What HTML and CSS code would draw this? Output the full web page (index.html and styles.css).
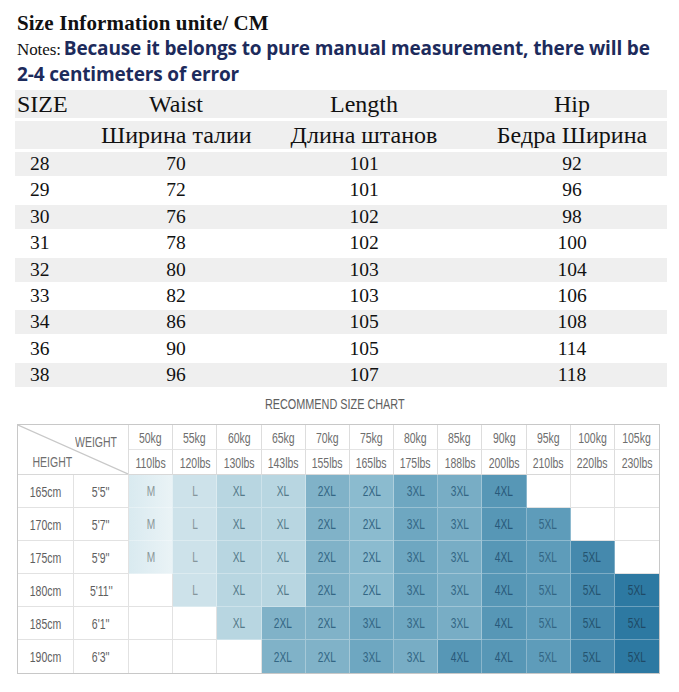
FILE: index.html
```html
<!DOCTYPE html>
<html lang="en">
<head>
<meta charset="utf-8">
<title>Size Information</title>
<link rel="stylesheet" href="styles.css">
</head>
<body>
<div class="page">
  <div class="title">Size Information unite/ CM</div>
  <div class="notes"><span class="notes-label">Notes:</span><span class="notes-text">Because it belongs to pure manual measurement, there will be <span class="nb">2-4</span> centimeters of error</span></div>

  <div class="size-table">
    <div class="row head">
      <div class="c c1 left">SIZE</div>
      <div class="c">Waist</div>
      <div class="c">Length</div>
      <div class="c">Hip</div>
    </div>
    <div class="row head">
      <div class="c c1"></div>
      <div class="c">Ширина талии</div>
      <div class="c">Длина штанов</div>
      <div class="c">Бедра Ширина</div>
    </div>
    <div class="rows">
      <div class="row data alt"><div class="c c1 num">28</div><div class="c">70</div><div class="c">101</div><div class="c">92</div></div>
      <div class="row data"><div class="c c1 num">29</div><div class="c">72</div><div class="c">101</div><div class="c">96</div></div>
      <div class="row data alt"><div class="c c1 num">30</div><div class="c">76</div><div class="c">102</div><div class="c">98</div></div>
      <div class="row data"><div class="c c1 num">31</div><div class="c">78</div><div class="c">102</div><div class="c">100</div></div>
      <div class="row data alt"><div class="c c1 num">32</div><div class="c">80</div><div class="c">103</div><div class="c">104</div></div>
      <div class="row data"><div class="c c1 num">33</div><div class="c">82</div><div class="c">103</div><div class="c">106</div></div>
      <div class="row data alt"><div class="c c1 num">34</div><div class="c">86</div><div class="c">105</div><div class="c">108</div></div>
      <div class="row data"><div class="c c1 num">36</div><div class="c">90</div><div class="c">105</div><div class="c">114</div></div>
      <div class="row data alt"><div class="c c1 num">38</div><div class="c">96</div><div class="c">107</div><div class="c">118</div></div>
    </div>
  </div>

  <div class="chart-title"><span class="t">RECOMMEND SIZE CHART</span></div>

  <div class="chart">
    <div class="corner">
      <svg class="diag" viewBox="0 0 100 100" preserveAspectRatio="none"><line x1="0" y1="0" x2="100" y2="100" stroke="#c8c8c8" stroke-width="1.2" vector-effect="non-scaling-stroke"/></svg>
      <span class="w-label"><span class="t">WEIGHT</span></span>
      <span class="h-label"><span class="t">HEIGHT</span></span>
    </div>
    <div class="hc kg"><span class="t">50kg</span></div><div class="hc kg"><span class="t">55kg</span></div><div class="hc kg"><span class="t">60kg</span></div><div class="hc kg"><span class="t">65kg</span></div><div class="hc kg"><span class="t">70kg</span></div><div class="hc kg"><span class="t">75kg</span></div><div class="hc kg"><span class="t">80kg</span></div><div class="hc kg"><span class="t">85kg</span></div><div class="hc kg"><span class="t">90kg</span></div><div class="hc kg"><span class="t">95kg</span></div><div class="hc kg"><span class="t">100kg</span></div><div class="hc kg last"><span class="t">105kg</span></div>
    <div class="hc lb"><span class="t">110lbs</span></div><div class="hc lb"><span class="t">120lbs</span></div><div class="hc lb"><span class="t">130lbs</span></div><div class="hc lb"><span class="t">143lbs</span></div><div class="hc lb"><span class="t">155lbs</span></div><div class="hc lb"><span class="t">165lbs</span></div><div class="hc lb"><span class="t">175lbs</span></div><div class="hc lb"><span class="t">188lbs</span></div><div class="hc lb"><span class="t">200lbs</span></div><div class="hc lb"><span class="t">210lbs</span></div><div class="hc lb"><span class="t">220lbs</span></div><div class="hc lb last"><span class="t">230lbs</span></div>

    <div class="hcell"><span class="t">165cm</span></div><div class="hcell"><span class="t">5'5''</span></div>
    <div class="cell m"><span class="t">M</span></div><div class="cell l"><span class="t">L</span></div><div class="cell xl"><span class="t">XL</span></div><div class="cell xl"><span class="t">XL</span></div><div class="cell x2"><span class="t">2XL</span></div><div class="cell x2b"><span class="t">2XL</span></div><div class="cell x3"><span class="t">3XL</span></div><div class="cell x3b"><span class="t">3XL</span></div><div class="cell x4"><span class="t">4XL</span></div><div class="cell e"></div><div class="cell e"></div><div class="cell e last"></div>

    <div class="hcell"><span class="t">170cm</span></div><div class="hcell"><span class="t">5'7''</span></div>
    <div class="cell m"><span class="t">M</span></div><div class="cell l"><span class="t">L</span></div><div class="cell xl"><span class="t">XL</span></div><div class="cell xl"><span class="t">XL</span></div><div class="cell x2"><span class="t">2XL</span></div><div class="cell x2b"><span class="t">2XL</span></div><div class="cell x3"><span class="t">3XL</span></div><div class="cell x3b"><span class="t">3XL</span></div><div class="cell x4"><span class="t">4XL</span></div><div class="cell x5a"><span class="t">5XL</span></div><div class="cell e"></div><div class="cell e last"></div>

    <div class="hcell"><span class="t">175cm</span></div><div class="hcell"><span class="t">5'9''</span></div>
    <div class="cell m"><span class="t">M</span></div><div class="cell l"><span class="t">L</span></div><div class="cell xl"><span class="t">XL</span></div><div class="cell xl"><span class="t">XL</span></div><div class="cell x2"><span class="t">2XL</span></div><div class="cell x2b"><span class="t">2XL</span></div><div class="cell x3"><span class="t">3XL</span></div><div class="cell x3b"><span class="t">3XL</span></div><div class="cell x4"><span class="t">4XL</span></div><div class="cell x5a"><span class="t">5XL</span></div><div class="cell x5b"><span class="t">5XL</span></div><div class="cell e last"></div>

    <div class="hcell"><span class="t">180cm</span></div><div class="hcell"><span class="t">5'11''</span></div>
    <div class="cell e"></div><div class="cell l"><span class="t">L</span></div><div class="cell xl"><span class="t">XL</span></div><div class="cell xl"><span class="t">XL</span></div><div class="cell x2"><span class="t">2XL</span></div><div class="cell x2b"><span class="t">2XL</span></div><div class="cell x3"><span class="t">3XL</span></div><div class="cell x3b"><span class="t">3XL</span></div><div class="cell x4"><span class="t">4XL</span></div><div class="cell x5a"><span class="t">5XL</span></div><div class="cell x5b"><span class="t">5XL</span></div><div class="cell x5c last"><span class="t">5XL</span></div>

    <div class="hcell"><span class="t">185cm</span></div><div class="hcell"><span class="t">6'1''</span></div>
    <div class="cell e"></div><div class="cell e"></div><div class="cell xl"><span class="t">XL</span></div><div class="cell x2"><span class="t">2XL</span></div><div class="cell x2"><span class="t">2XL</span></div><div class="cell x3"><span class="t">3XL</span></div><div class="cell x3"><span class="t">3XL</span></div><div class="cell x3b"><span class="t">3XL</span></div><div class="cell x4"><span class="t">4XL</span></div><div class="cell x5a"><span class="t">5XL</span></div><div class="cell x5b"><span class="t">5XL</span></div><div class="cell x5c last"><span class="t">5XL</span></div>

    <div class="hcell last-row"><span class="t">190cm</span></div><div class="hcell last-row"><span class="t">6'3''</span></div>
    <div class="cell e last-row"></div><div class="cell e last-row"></div><div class="cell e last-row"></div><div class="cell x2 last-row"><span class="t">2XL</span></div><div class="cell x2 last-row"><span class="t">2XL</span></div><div class="cell x3 last-row"><span class="t">3XL</span></div><div class="cell x3b last-row"><span class="t">3XL</span></div><div class="cell x4 last-row"><span class="t">4XL</span></div><div class="cell x4 last-row"><span class="t">4XL</span></div><div class="cell x5a last-row"><span class="t">5XL</span></div><div class="cell x5b last-row"><span class="t">5XL</span></div><div class="cell x5c last last-row"><span class="t">5XL</span></div>
  </div>
</div>
</body>
</html>
```

FILE: styles.css
```css
* { box-sizing: border-box; }

body {
  margin: 0;
  background: #ffffff;
  font-family: "Liberation Serif", "Times New Roman", serif;
  color: #111111;
}

.page {
  padding: 11px 12px 0 15px;
}

.title {
  font-weight: bold;
  font-size: 21px;
  line-height: 25px;
  padding-left: 2px;
  letter-spacing: 0.15px;
}

.notes {
  line-height: 25px;
  padding-left: 2px;
  padding-right: 6px;
}

.notes-label {
  font-family: "Liberation Serif", serif;
  font-size: 17px;
  letter-spacing: -0.1px;
  margin-right: 3px;
}

.notes-text {
  font-family: "Open Sans", "Noto Sans", sans-serif;
  font-weight: bold;
  font-size: 19px;
  color: #1d2b5c;
  letter-spacing: -0.15px;
}

.nb {
  white-space: nowrap;
}

.size-table {
  width: 652px;
  margin-top: 2px;
  display: flex;
  flex-direction: column;
  gap: 3px;
}

.row {
  display: grid;
  grid-template-columns: 86px 150px 226px 190px;
  align-items: center;
}

.row .c {
  text-align: center;
  white-space: nowrap;
}

.row .left {
  text-align: left;
  padding-left: 2px;
}

.row.head {
  height: 28px;
  background: #efefef;
  font-size: 24px;
  line-height: 28px;
}

.rows {
  display: flex;
  flex-direction: column;
  gap: 2.4px;
}

.row.data {
  height: 24px;
  font-size: 19.5px;
  line-height: 24px;
}

.row.data.alt {
  background: #efefef;
}

.row .num {
  text-align: left;
  padding-left: 15px;
}

.t {
  display: inline-block;
  white-space: nowrap;
  transform: scaleX(0.7);
}

.chart-title {
  margin-top: 8px;
  text-align: center;
  font-family: "Liberation Sans", Arial, sans-serif;
  font-size: 15.5px;
  line-height: 18px;
  color: #5e5e5e;
  padding-right: 12px;
}

.chart {
  margin-top: 11px;
  margin-left: 2px;
  width: 643px;
  border: 1px solid #c8c8c8;
  display: grid;
  grid-template-columns: 56px 55px repeat(12, minmax(0, 1fr));
  grid-template-rows: 25px 25px repeat(6, 33px);
  font-family: "Liberation Sans", Arial, sans-serif;
  font-size: 15px;
  color: #6e6e6e;
}

.corner {
  grid-column: 1 / 3;
  grid-row: 1 / 3;
  position: relative;
  border-right: 1px solid #dddddd;
  border-bottom: 1px solid #d8d8d8;
  display: flex;
  flex-direction: column;
  justify-content: space-between;
  padding: 8px 2px 4px 6px;
}

.diag {
  position: absolute;
  left: 0;
  top: 0;
  width: 100%;
  height: 100%;
}

.w-label { align-self: flex-end; line-height: 17px; }
.h-label { align-self: flex-start; line-height: 17px; }

.hc {
  display: flex;
  align-items: center;
  justify-content: center;
  min-width: 0;
  border-right: 1px solid #dddddd;
}

.hc.kg { border-bottom: 1px solid #e4e4e4; }
.hc.lb { border-bottom: 1px solid #d8d8d8; }
.hc.last, .cell.last { border-right: none; }

.hcell {
  display: flex;
  align-items: center;
  justify-content: center;
  min-width: 0;
  border-right: 1px solid #e2e2e2;
  border-bottom: 1px solid #e2e2e2;
  color: #5e5e5e;
}

.cell {
  display: flex;
  align-items: center;
  justify-content: center;
  min-width: 0;
  border-right: 1px solid rgba(255, 255, 255, 0.3);
  border-bottom: 1px solid rgba(255, 255, 255, 0.3);
  color: #336684;
  font-size: 14.5px;
}

.hcell.last-row, .cell.last-row { border-bottom: none; }

.cell.e {
  background: #ffffff;
  border-right-color: #e2e2e2;
  border-bottom-color: #e2e2e2;
}

.cell.m {
  background: linear-gradient(to right, #d9eaf0, #eaf3f6);
  color: #8a9699;
}

.cell.l {
  background: #cde2ea;
  color: #86969c;
}

.cell.xl {
  background: #b8d6e1;
  color: #557a89;
}

.cell.x2 { background: #80b2c8; }
.cell.x2b { background: #8bbbcf; }
.cell.x3 { background: #6ea7c1; }
.cell.x3b { background: #78adc5; }
.cell.x4 { background: #5797b6; color: #28597a; }
.cell.x5a { background: #5e9cba; }
.cell.x5b { background: #4589ad; color: #24536f; }
.cell.x5c { background: #2d79a2; color: #1f4a66; }
```
